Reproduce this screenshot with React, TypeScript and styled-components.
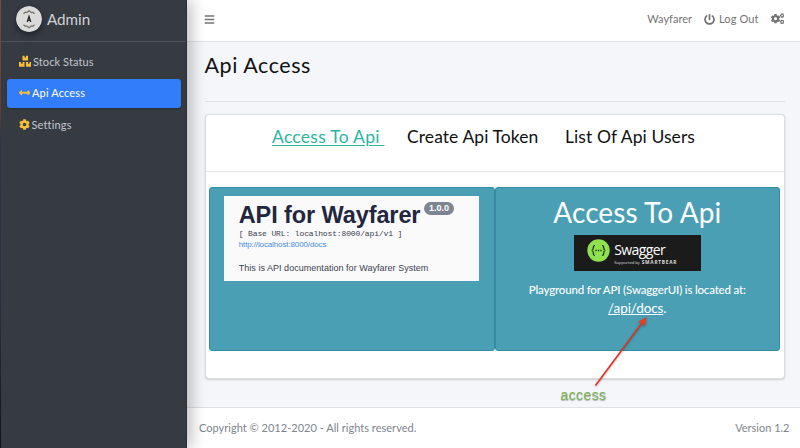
import React from 'react';
import styled, { createGlobalStyle } from 'styled-components';
import { FaBars, FaPowerOff, FaCogs, FaCog, FaBoxes, FaArrowsAltH } from 'react-icons/fa';

const GlobalStyle = createGlobalStyle`
  *, *::before, *::after { box-sizing: border-box; }
  body { margin: 0; overflow: hidden; font-family: Lato, "Open Sans", sans-serif; }
  svg { display: block; flex: none; }
`;

const Page = styled.div`
  display: grid;
  grid-template-columns: 187px 1fr;
  width: 800px;
  height: 448px;
  background: #f4f6f9;
`;

const Sidebar = styled.aside`
  position: relative;
  z-index: 2;
  background: #363b42;
  border-right: 1px solid #2c3138;
  box-shadow: 5px 0 14px rgba(0, 0, 0, 0.24);
`;

const Edge = styled.div`
  position: absolute;
  inset: 0 auto 0 0;
  width: 1px;
  background: linear-gradient(#7a4a3c, #6b3c36 24%, #2b3547 32%, #26303f 70%, #10151c 100%);
`;

const Brand = styled.div`
  display: flex;
  align-items: center;
  gap: 5px;
  height: 42px;
  padding: 0 0 3px 16px;
  border-bottom: 1px solid #4e545b;
  color: #cfd2d5;
`;

const Logo = styled.svg`
  width: 26px;
  height: 26px;
  border-radius: 50%;
  box-shadow: 0 3px 6px rgba(0, 0, 0, 0.4);
`;

const Label = styled.span<{ $size: number; $spacing?: number; $weight?: number }>`
  font-size: ${(p) => p.$size}px;
  letter-spacing: ${(p) => p.$spacing ?? 0}px;
  font-weight: ${(p) => p.$weight ?? 400};
  white-space: pre;
  line-height: 1.2;
`;

const Nav = styled.nav`
  display: flex;
  flex-direction: column;
  gap: 2px;
  padding: 5px 5px 0 7px;
`;

const NavItem = styled.a<{ $active?: boolean; $gap: number }>`
  display: flex;
  align-items: center;
  gap: ${(p) => p.$gap}px;
  height: 29.5px;
  padding: 0 0 1px 11.5px;
  border-radius: 3px;
  color: ${(p) => (p.$active ? '#fff' : '#c2c7d0')};
  background: ${(p) => (p.$active ? '#327dfa' : 'transparent')};
  box-shadow: ${(p) => (p.$active ? '0 1px 2px rgba(0,0,0,.25)' : 'none')};
  svg { color: #f8be38; }
`;

const Main = styled.div`
  display: grid;
  grid-template-rows: 42px 365px 41px;
  min-width: 0;
`;

const Topbar = styled.header`
  display: flex;
  align-items: center;
  padding: 0 16px 3px 17px;
  background: #fff;
  border-bottom: 1px solid #dee2e6;
  color: #747474;
`;

const TopLinks = styled.div`
  display: flex;
  align-items: center;
  margin-left: auto;
  gap: 12px;
`;

const TopLink = styled.a`
  display: flex;
  align-items: center;
  gap: 4px;
`;

const Content = styled.main`
  padding: 0 15.5px 0 17.5px;
`;

const Title = styled.h1`
  display: flex;
  align-items: center;
  height: 60px;
  margin: 0;
  padding-bottom: 12px;
  border-bottom: 1px solid #dfe1e4;
  color: #111;
`;

const Card = styled.section`
  height: 264.5px;
  margin-top: 12px;
  border: 1px solid #dcdee1;
  border-radius: 4px;
  background: #fff;
  box-shadow: 0 0 1px rgba(0, 0, 0, 0.12), 0 1px 2px rgba(0, 0, 0, 0.16);
`;

const Tabs = styled.div`
  display: flex;
  height: 57px;
  padding: 11px 0 0 66.5px;
  border-bottom: 1px solid #e6e6e6;
`;

const Tab = styled.a<{ $active?: boolean; $width: number }>`
  width: ${(p) => p.$width}px;
  color: ${(p) => (p.$active ? '#2ab5a0' : '#111')};
  text-decoration: ${(p) => (p.$active ? 'underline' : 'none')};
  text-decoration-thickness: 1px;
  text-underline-offset: 2px;
`;

const Panels = styled.div`
  display: grid;
  grid-template-columns: 1fr 1fr;
  height: 164px;
  margin: 15px 3.5px 0;
`;

const Panel = styled.div`
  display: flex;
  flex-direction: column;
  align-items: center;
  border: 1px solid #338c9f;
  border-radius: 3px;
  background: #4a9fb5;
  color: #fff;
`;

const ApiInfo = styled.div`
  display: flex;
  flex-direction: column;
  align-items: flex-start;
  width: 255px;
  height: 85px;
  margin-top: 8px;
  padding: 5px 0 0 14.5px;
  background: #fafafa;
  color: #3b4151;
  font-family: "Liberation Sans", sans-serif;
`;

const ApiHeading = styled.div`
  display: flex;
  align-items: flex-start;
  gap: 3.5px;
  height: 28px;
  color: #22263f;
`;

const Pill = styled.span`
  display: flex;
  align-items: center;
  justify-content: center;
  width: 30px;
  height: 13px;
  margin-top: 0.5px;
  border-radius: 7px;
  background: #7d8492;
  color: #fff;
`;

const Mono = styled.div`
  height: 10px;
  display: flex;
  align-items: center;
  font-family: "Liberation Mono", monospace;
`;

const DocsUrl = styled.div`
  display: flex;
  align-items: center;
  height: 12px;
  color: #4a8be2;
`;

const Description = styled.div`
  display: flex;
  margin-top: 12px;
`;

const PanelTitle = styled.div`
  height: 47px;
  padding-top: 8px;
`;

const SwaggerLogo = styled.div`
  display: flex;
  align-items: flex-start;
  gap: 4.5px;
  width: 127px;
  height: 36px;
  padding: 4px 0 0 13px;
  background: #1b1b1b;
`;

const SwaggerName = styled.div`
  display: flex;
  flex-direction: column;
  padding-top: 3px;
  gap: 1px;
  font-family: "Open Sans", sans-serif;
`;

const Supported = styled.div`
  display: flex;
  align-items: center;
  gap: 2px;
  height: 6px;
  color: #dedede;
`;

const Playground = styled.div`
  height: 18px;
  margin-top: 8.5px;
  line-height: 16px;
`;

const DocsLink = styled.div`
  line-height: 18px;
  a { text-decoration: underline; text-underline-offset: 1px; text-decoration-thickness: 1px; }
`;

const Footer = styled.footer`
  display: flex;
  align-items: center;
  justify-content: space-between;
  padding: 0 10.5px 0 12px;
  border-top: 1px solid #dee2e6;
  background: #fff;
  color: #7d868e;
`;

const Annotation = styled.div`
  position: absolute;
  z-index: 3;
  left: 560.5px;
  top: 310px;
  width: 100px;
  color: #83b05a;
  font-family: "Liberation Sans", sans-serif;
  text-shadow: 0 1px 1px rgba(0, 0, 0, 0.3);
`;

const Arrow = styled.svg`
  filter: drop-shadow(0 1px 1px rgba(0, 0, 0, 0.3));
`;

export default function App() {
  return (
    <>
      <GlobalStyle />
      <Page>
        <Sidebar>
          <Brand>
            <Logo viewBox="0 0 26 26">
              <circle cx="13" cy="13" r="13" fill="#dadada" />
              <path d="M7.5 7.8 9.2 6.2 10.6 6.6 13 4.8 15.4 6.6 16.8 6.2 18.5 7.8M7.5 18.7 9.2 20.3 10.6 19.9 13 21.7 15.4 19.9 16.8 20.3 18.5 18.7" fill="none" stroke="#77736d" strokeWidth="1.2" />
              <path d="M11.2 16 13 10.3 14.8 16M11.8 14.3h2.4" fill="none" stroke="#222" strokeWidth="1.2" />
            </Logo>
            <Label $size={15.2}>Admin</Label>
          </Brand>
          <Nav>
            <NavItem $gap={2}><FaBoxes size={12.5} /><Label $size={11} $spacing={0.09}>Stock Status</Label></NavItem>
            <NavItem $gap={2} $active><FaArrowsAltH size={11.5} /><Label $size={11} $spacing={0.15}>Api Access</Label></NavItem>
            <NavItem $gap={2}><FaCog size={11} /><Label $size={11} $spacing={0.15}>Settings</Label></NavItem>
          </Nav>
          <Edge />
        </Sidebar>
        <Main>
          <Topbar>
            <FaBars size={11} />
            <TopLinks>
              <Label $size={11}>Wayfarer</Label>
              <TopLink><FaPowerOff size={11} /><Label $size={11} $spacing={0.1}>Log Out</Label></TopLink>
              <FaCogs size={13.5} />
            </TopLinks>
          </Topbar>
          <Content>
            <Title><Label $size={21.5} $spacing={0.55}>Api Access</Label></Title>
            <Card>
              <Tabs>
                <Tab $active $width={135}><Label $size={17.5} $spacing={0.27}>{'Access To Api '}</Label></Tab>
                <Tab $width={158}><Label $size={17.5} $spacing={0.08}>Create Api Token</Label></Tab>
                <Tab $width={140}><Label $size={17.5} $spacing={0.08}>List Of Api Users</Label></Tab>
              </Tabs>
              <Panels>
                <Panel>
                  <ApiInfo>
                    <ApiHeading>
                      <Label $size={23.5} $spacing={-0.1} $weight={700}>API for Wayfarer</Label>
                      <Pill><Label $size={9} $weight={700}>1.0.0</Label></Pill>
                    </ApiHeading>
                    <Mono><Label $size={8} $spacing={-0.13}>[ Base URL: localhost:8000/api/v1 ]</Label></Mono>
                    <DocsUrl><Label $size={8} $spacing={-0.12}>http://localhost:8000/docs</Label></DocsUrl>
                    <Description><Label $size={9} $spacing={0.03}>This is API documentation for Wayfarer System</Label></Description>
                  </ApiInfo>
                </Panel>
                <Panel>
                  <PanelTitle><Label $size={28} $spacing={0.1}>Access To Api</Label></PanelTitle>
                  <SwaggerLogo>
                    <svg width="23" height="23" viewBox="0 0 23 23">
                      <circle cx="11.5" cy="11.5" r="11.2" fill="#8fe14e" />
                      <path d="M8 6.5c-1.6 0-1.7.7-1.7 2.3 0 1.8-.3 2.5-1.6 2.7 1.3.2 1.6.9 1.6 2.7 0 1.6.1 2.3 1.7 2.3M15 6.5c1.6 0 1.7.7 1.7 2.3 0 1.8.3 2.5 1.6 2.7-1.3.2-1.6.9-1.6 2.7 0 1.6-.1 2.3-1.7 2.3" fill="none" stroke="#1d2b1d" strokeWidth="1.2" />
                      <path d="M8.4 11.5h1.3M10.9 11.5h1.3M13.4 11.5h1.3" stroke="#1d2b1d" strokeWidth="1.3" />
                    </svg>
                    <SwaggerName>
                      <Label $size={14} $spacing={-0.6}>Swagger</Label>
                      <Supported><Label $size={4.2} $spacing={-0.08}>Supported by</Label><Label $size={4.8} $spacing={0.75} $weight={700}>SMARTBEAR</Label></Supported>
                    </SwaggerName>
                  </SwaggerLogo>
                  <Playground><Label $size={11.5} $spacing={-0.18} $weight={500}>Playground for API (SwaggerUI) is located at:</Label></Playground>
                  <DocsLink><Label $size={13.5} $spacing={-0.1}><a>/api/docs</a>.</Label></DocsLink>
                </Panel>
              </Panels>
            </Card>
          </Content>
          <Footer>
            <Label $size={11} $spacing={0.02}>Copyright © 2012-2020 - All rights reserved.</Label>
            <Label $size={11}>Version 1.2</Label>
          </Footer>
        </Main>
        <Annotation>
          <Arrow width="100" height="76" viewBox="0 0 100 76">
            <path d="M34.5 75.5 81 13" stroke="#e0301e" strokeWidth="1.5" />
            <path d="M85.5 7 84 16 77.5 11.5Z" fill="#ee3b24" />
          </Arrow>
          <Label $size={14} $spacing={0.4}>access</Label>
        </Annotation>
      </Page>
    </>
  );
}
